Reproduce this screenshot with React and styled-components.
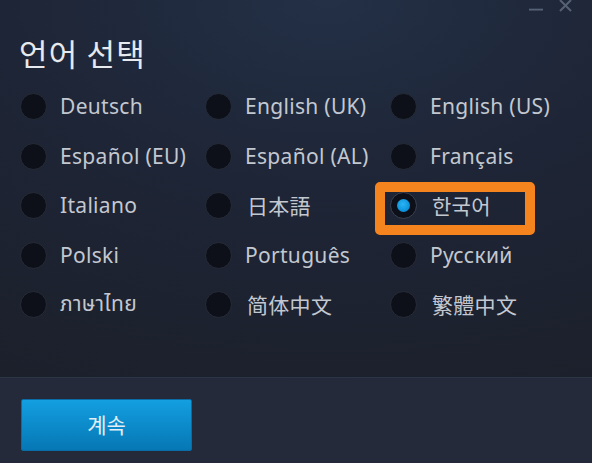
import React, { useState } from 'react';
import styled, { createGlobalStyle } from 'styled-components';

const GlobalStyle = createGlobalStyle`
  html, body {
    margin: 0;
    padding: 0;
    background: #1d212c;
  }
  *, *::before, *::after { box-sizing: border-box; }
`;

const Window = styled.div`
  width: 592px;
  height: 463px;
  display: flex;
  flex-direction: column;
  overflow: hidden;
  font-family: "Noto Sans", "Noto Sans CJK KR", "Noto Sans Thai", sans-serif;
  background: radial-gradient(ellipse 120% 90% at 55% 0%, #233046 0%, #1e2536 45%, #1c202b 100%);
`;

const TitleBar = styled.div`
  height: 18px;
  display: flex;
  justify-content: flex-end;
  align-items: flex-start;
  gap: 15px;
  padding-right: 20px;
  margin-top: -5px;
`;

const Control = styled.div`
  width: 14px;
  height: 18px;
  display: flex;
  align-items: center;
  justify-content: center;
  color: #566175;
`;

const Body = styled.div`
  flex: 1;
  padding: 19px 20px 0;
`;

const Title = styled.h1`
  margin: 0 0 0 -1px;
  font-family: "Noto Sans CJK KR", sans-serif;
  font-weight: 400;
  font-size: 31px;
  line-height: 42px;
  color: #e6e9ee;
  letter-spacing: 1.2px;
`;

const Grid = styled.div`
  margin-top: 8px;
  display: grid;
  grid-template-columns: 185px 185px 185px;
  grid-auto-rows: 49.5px;
`;

const Option = styled.label`
  position: relative;
  display: flex;
  align-items: center;
  gap: 13px;
  cursor: pointer;

  ${p => p.highlighted && `
    &::after {
      content: '';
      position: absolute;
      left: -15px;
      top: 1px;
      width: 160px;
      height: 53px;
      border: 10px solid #f5841f;
      border-radius: 5px;
      pointer-events: none;
    }
  `}
`;

const Radio = styled.span`
  width: 27px;
  height: 27px;
  flex: none;
  border-radius: 50%;
  background: #0d1018;
  border: 1px solid ${p => (p.checked ? '#3a4252' : '#262c38')};
  display: flex;
  align-items: center;
  justify-content: center;

  &::before {
    content: '';
    display: ${p => (p.checked ? 'block' : 'none')};
    width: 13px;
    height: 13px;
    border-radius: 50%;
    background: radial-gradient(circle at 45% 40%, #2ab4f5 0%, #0a8fd8 70%, #0778b8 100%);
  }
`;

const Label = styled.span`
  font-size: 21px;
  letter-spacing: 0.3px;
  color: #c3c8d0;
  white-space: nowrap;
  margin-top: -1px;
  margin-left: ${p => (p.cjk ? '2px' : '0')};
`;

const Footer = styled.div`
  height: 86px;
  flex: none;
  border-top: 1px solid #2c3545;
  background: #242a39;
  padding: 21px 20px 0 21px;
`;

const Button = styled.button`
  width: 171px;
  height: 52px;
  border: 1px solid #0b6ca5;
  border-radius: 2px;
  background: linear-gradient(#139fe1, #0677b4);
  color: #e3eef6;
  font-family: "Noto Sans CJK KR", sans-serif;
  font-size: 21px;
  cursor: pointer;
  padding: 0 0 2px;
`;

const languages = [
  'Deutsch', 'English (UK)', 'English (US)',
  'Español (EU)', 'Español (AL)', 'Français',
  'Italiano', '日本語', '한국어',
  'Polski', 'Português', 'Русский',
  'ภาษาไทย', '简体中文', '繁體中文',
];

const fontFor = lang => {
  if (lang === '日本語') return '"Noto Sans CJK JP", sans-serif';
  if (lang === '简体中文') return '"Noto Sans CJK SC", sans-serif';
  if (lang === '繁體中文') return '"Noto Sans CJK TC", sans-serif';
  if (lang === '한국어') return '"Noto Sans CJK KR", sans-serif';
  return undefined;
};

export default function App() {
  const [selected, setSelected] = useState('한국어');

  return (
    <>
      <GlobalStyle />
      <Window>
        <TitleBar>
          <Control>
            <svg width="15" height="18" viewBox="0 0 15 18">
              <rect x="0" y="14" width="15" height="2" fill="currentColor" />
            </svg>
          </Control>
          <Control>
            <svg width="13" height="18" viewBox="0 0 13 18">
              <path d="M1 5 L12 16 M12 5 L1 16" stroke="currentColor" strokeWidth="2" />
            </svg>
          </Control>
        </TitleBar>
        <Body>
          <Title>언어 선택</Title>
          <Grid>
            {languages.map(lang => (
              <Option
                key={lang}
                highlighted={lang === '한국어'}
                onClick={() => setSelected(lang)}
              >
                <Radio checked={selected === lang} />
                <Label
                  cjk={!!fontFor(lang)}
                  style={fontFor(lang) ? { fontFamily: fontFor(lang) } : undefined}
                >
                  {lang}
                </Label>
              </Option>
            ))}
          </Grid>
        </Body>
        <Footer>
          <Button>계속</Button>
        </Footer>
      </Window>
    </>
  );
}
